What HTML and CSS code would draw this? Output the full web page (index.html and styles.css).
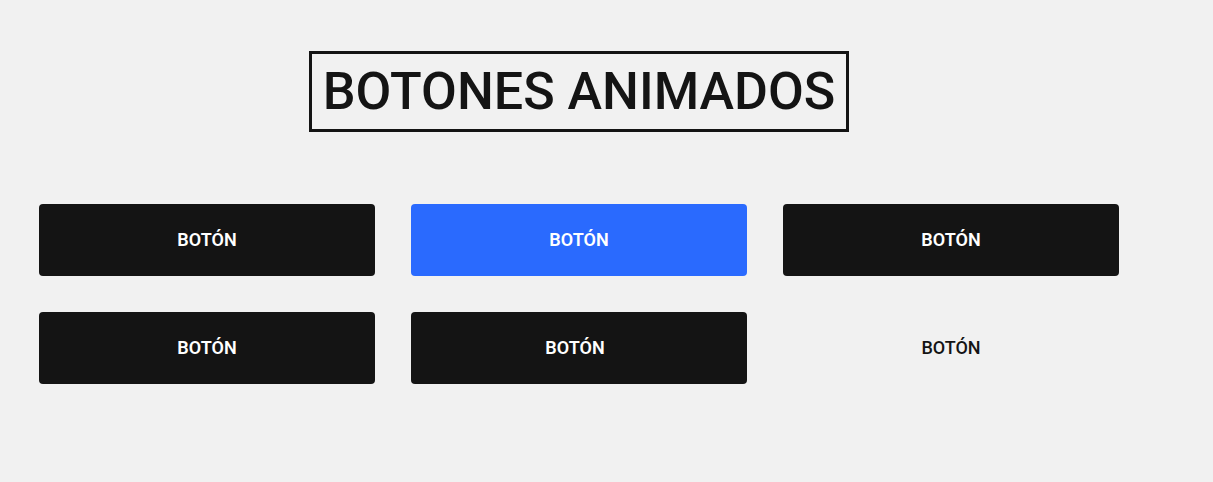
FILE: index.html
```html
<!DOCTYPE html>
<html lang="es">
<head>
<meta charset="utf-8">
<title>Botones animados</title>
<link rel="stylesheet" href="styles.css">
</head>
<body>
<main class="page">
  <header class="head">
    <h1 class="title">BOTONES ANIMADOS</h1>
  </header>
  <section class="grid">
    <button class="btn">BOTÓN</button>
    <button class="btn btn-blue">BOTÓN</button>
    <button class="btn">BOTÓN</button>
    <button class="btn">BOTÓN</button>
    <button class="btn btn-shift">BOTÓN</button>
    <button class="btn btn-ghost">BOTÓN</button>
  </section>
</main>
</body>
</html>
```
FILE: styles.css
```css
html, body {
  margin: 0;
  padding: 0;
  background: #f1f1f1;
  font-family: Roboto, "Liberation Sans", sans-serif;
  color: #141414;
}
.page {
  width: 1158px;
  padding-top: 51px;
}
.head {
  display: flex;
  justify-content: center;
}
.title {
  margin: 0;
  border: 3px solid #141414;
  padding: 0 11px;
  height: 75px;
  display: flex;
  align-items: center;
  font-size: 52px;
  font-weight: 500;
  line-height: 1;
}
.grid {
  margin-top: 72px;
  display: grid;
  grid-template-columns: repeat(3, 336px);
  column-gap: 36px;
  row-gap: 36px;
  padding-left: 39px;
}
.btn {
  height: 72px;
  border: none;
  border-radius: 4px;
  background: #141414;
  color: #ffffff;
  font-family: Roboto, "Liberation Sans", sans-serif;
  font-size: 18px;
  font-weight: 600;
  padding: 0 0 2px;
}
.btn-blue {
  background: #2a6afe;
}
.btn-shift {
  padding-right: 8px;
}
.btn-ghost {
  background: transparent;
  color: #141414;
  font-weight: 500;
}
```
